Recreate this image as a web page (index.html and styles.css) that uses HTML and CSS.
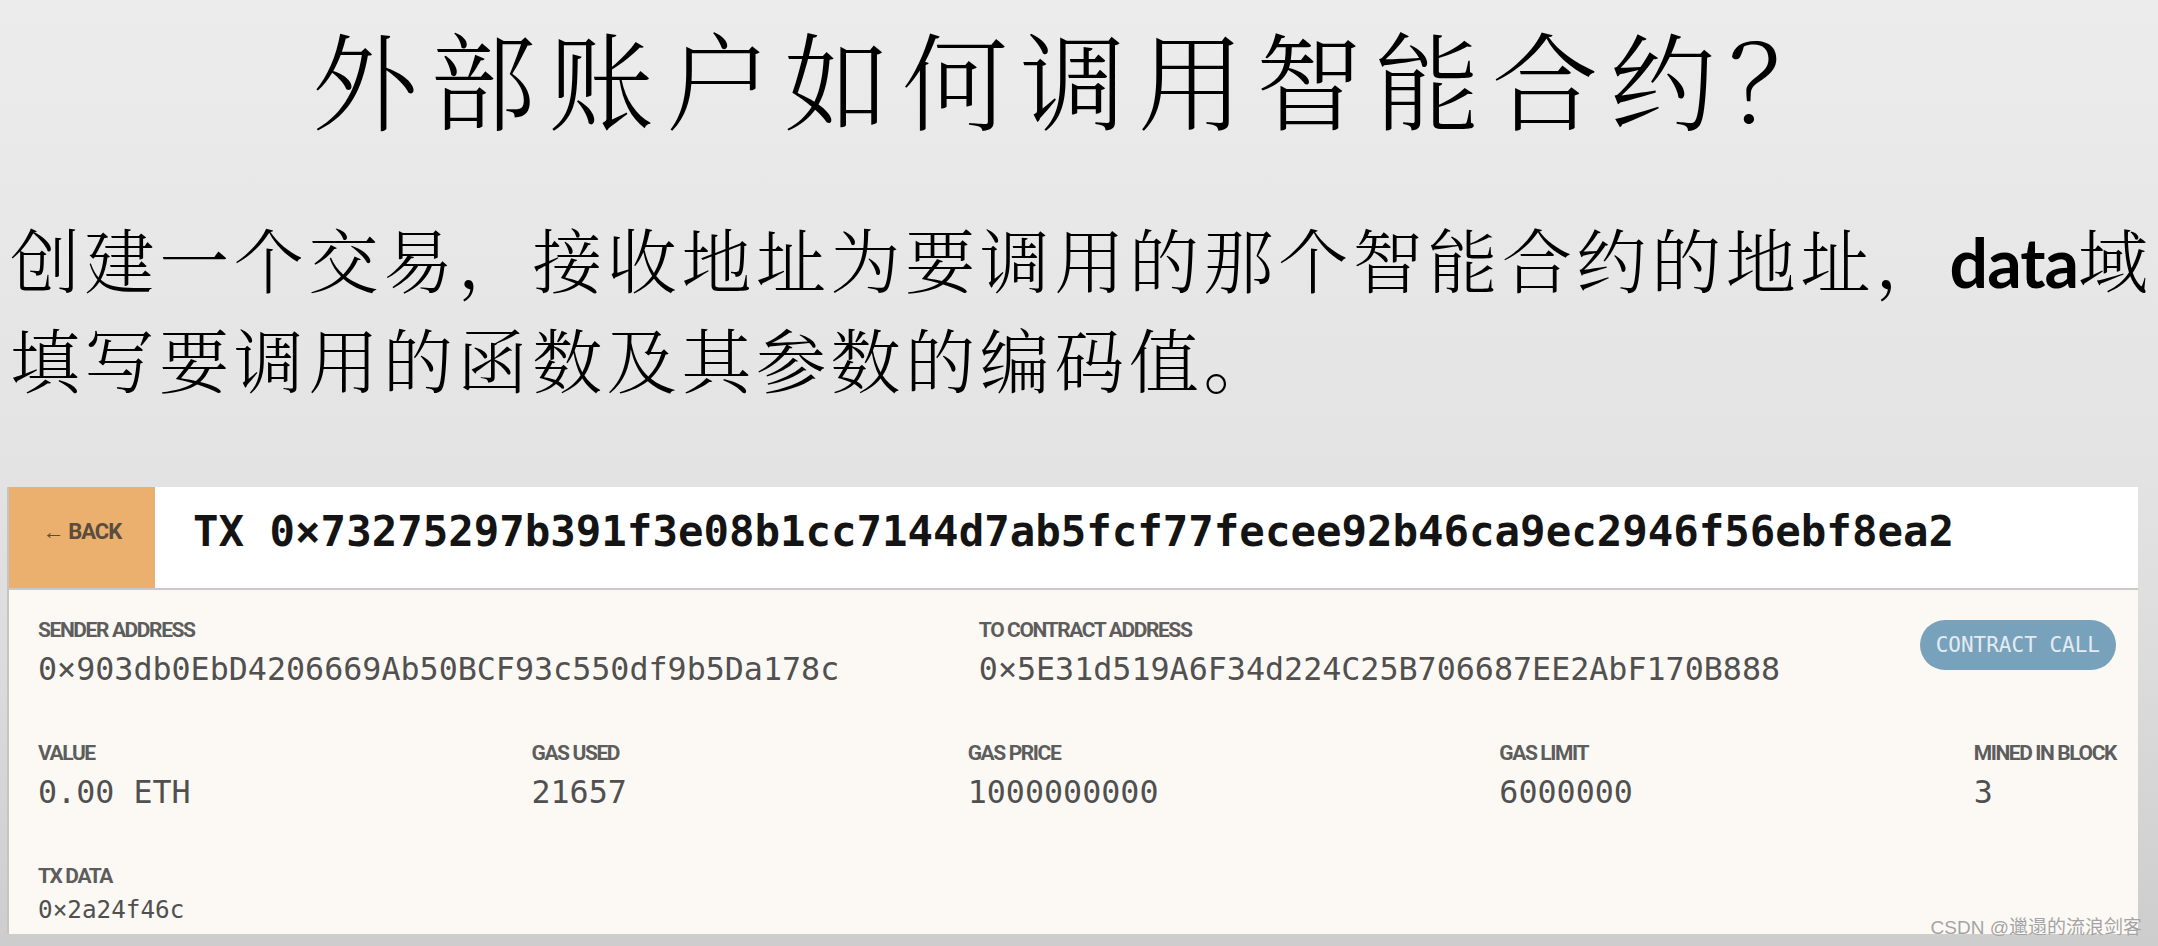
FILE: index.html
```html
<!DOCTYPE html>
<html lang="zh-CN">

<head>
    <meta charset="UTF-8">
    <meta name="viewport" content="width=device-width, initial-scale=1.0">
    <title>外部账户如何调用智能合约</title>
    <link rel="stylesheet" href="styles.css">
</head>

<body>
    <h1 class="slide-title">外部账户如何调用智能合约？</h1>
    <p class="slide-text">创建一个交易，接收地址为要调用的那个智能合约的地址，<span class="latin">data</span>域<br>填写要调用的函数及其参数的编码值。</p>

    <div class="tx-card">
        <div class="tx-header">
            <div class="back-btn">← BACK</div>
            <div class="tx-hash">TX 0×73275297b391f3e08b1cc7144d7ab5fcf77fecee92b46ca9ec2946f56ebf8ea2</div>
        </div>
        <div class="tx-body">
            <div class="tx-row">
                <div class="field">
                    <div class="label">SENDER ADDRESS</div>
                    <div class="value">0×903db0EbD4206669Ab50BCF93c550df9b5Da178c</div>
                </div>
                <div class="field">
                    <div class="label">TO CONTRACT ADDRESS</div>
                    <div class="value">0×5E31d519A6F34d224C25B706687EE2AbF170B888</div>
                </div>
                <div class="badge">CONTRACT CALL</div>
            </div>
            <div class="tx-row">
                <div class="field">
                    <div class="label">VALUE</div>
                    <div class="value">0.00 ETH</div>
                </div>
                <div class="field">
                    <div class="label">GAS USED</div>
                    <div class="value">21657</div>
                </div>
                <div class="field">
                    <div class="label">GAS PRICE</div>
                    <div class="value">1000000000</div>
                </div>
                <div class="field">
                    <div class="label">GAS LIMIT</div>
                    <div class="value">6000000</div>
                </div>
                <div class="field">
                    <div class="label">MINED IN BLOCK</div>
                    <div class="value">3</div>
                </div>
            </div>
            <div class="tx-row">
                <div class="field">
                    <div class="label">TX DATA</div>
                    <div class="value small">0×2a24f46c</div>
                </div>
            </div>
        </div>
    </div>

    <div class="watermark">CSDN @邋遢的流浪剑客</div>
</body>

</html>
```

FILE: styles.css
```css
html {
    background: #cdcdcd;
}

body {
    margin: 0;
    min-height: 946px;
    position: relative;
    background: linear-gradient(to bottom, #ececec 0%, #e3e3e3 50%, #dcdcdc 70%, #cdcdcd 100%);
    font-family: "Noto Serif CJK SC", "Noto Sans CJK SC", serif;
    color: #000;
    overflow: hidden;
}

.slide-title {
    margin: 0;
    font-size: 106px;
    font-weight: 300;
    line-height: normal;
    letter-spacing: 12px;
    text-align: center;
    white-space: nowrap;
}

.slide-text {
    margin: 58px 0 0 0;
    padding-left: 10px;
    font-size: 70px;
    font-weight: 300;
    line-height: 96px;
    letter-spacing: 4.6px;
    white-space: nowrap;
}

.slide-text .latin {
    font-family: Lato, "Open Sans", sans-serif;
    font-weight: 700;
    font-size: 68px;
    letter-spacing: -1px;
}

.tx-card {
    margin: 81px 20px 0 7px;
    border-left: 2px solid #c4c4c4;
    background: #fcf9f4;
}

.tx-header {
    display: flex;
    align-items: center;
    height: 101px;
    background: #fff;
    border-bottom: 2px solid #c9c9c9;
}

.back-btn {
    width: 146px;
    height: 100%;
    display: flex;
    align-items: center;
    justify-content: center;
    padding-bottom: 12px;
    box-sizing: border-box;
    background: #ebb06d;
    color: #5a4c3e;
    font-family: Roboto, "Liberation Sans", sans-serif;
    font-weight: 700;
    font-size: 22px;
    letter-spacing: -1px;
}

.tx-hash {
    margin-left: 38px;
    padding-bottom: 12px;
    font-family: "DejaVu Sans Mono", "Liberation Mono", monospace;
    font-weight: 700;
    font-size: 42.4px;
    color: #141414;
    white-space: nowrap;
}

.tx-body {
    display: flex;
    flex-direction: column;
    gap: 53px;
    padding: 28px 22px 10px 29px;
}

.tx-row {
    display: flex;
    justify-content: space-between;
    align-items: flex-start;
}

.label {
    font-family: Roboto, "Liberation Sans", sans-serif;
    font-weight: 700;
    font-size: 21px;
    line-height: 24px;
    letter-spacing: -1.4px;
    color: #5d5d5d;
    margin-bottom: 8px;
    white-space: nowrap;
}

.value {
    font-family: "DejaVu Sans Mono", "Liberation Mono", monospace;
    font-size: 31.7px;
    line-height: 38px;
    color: #505050;
    white-space: nowrap;
}

.value.small {
    font-size: 24.3px;
    line-height: 28px;
}

.badge {
    margin-top: 2px;
    height: 50px;
    line-height: 50px;
    padding: 0 16px;
    border-radius: 25px;
    background: #78a2bb;
    color: #e3ecf1;
    font-family: "DejaVu Sans Mono", "Liberation Mono", monospace;
    font-size: 21px;
    white-space: nowrap;
}

.watermark {
    position: absolute;
    right: 16px;
    bottom: 9px;
    font-family: "Liberation Sans", "Noto Sans CJK SC", sans-serif;
    font-size: 19px;
    line-height: 1;
    color: #a3a3a3;
    text-shadow: 0 0 1px #fff;
}
```
